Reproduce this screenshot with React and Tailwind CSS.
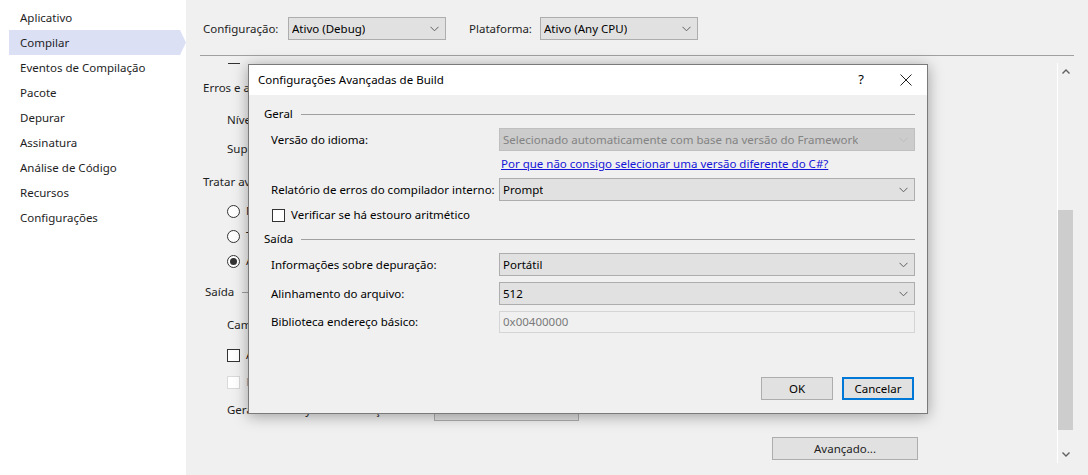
import React from "react";

const font = { fontFamily: '"Noto Sans", "Open Sans", sans-serif' };

const Chevron = ({ color = "#606060" }) => (
  <svg width="9" height="6" viewBox="0 0 9 6" className="shrink-0">
    <path d="M0.5 0.8 L4.5 4.8 L8.5 0.8" fill="none" stroke={color} strokeWidth="1" />
  </svg>
);

const Select = ({ value, className = "", disabled = false }) => (
  <div
    className={
      "flex items-center justify-between border pl-[3px] pr-[6px] " +
      (disabled
        ? "bg-[#cccccc] border-[#bfbfbf] text-[#838383] "
        : "bg-[#e1e1e1] border-[#adadad] text-black ") +
      className
    }
  >
    <span className="truncate">{value}</span>
    <Chevron color={disabled ? "#bcbcbc" : "#606060"} />
  </div>
);

const sideItems = [
  "Aplicativo",
  "Compilar",
  "Eventos de Compilação",
  "Pacote",
  "Depurar",
  "Assinatura",
  "Análise de Código",
  "Recursos",
  "Configurações",
];

const Radio = ({ checked }) => (
  <div className="w-[13px] h-[13px] shrink-0 rounded-full border border-[#333] bg-white flex items-center justify-center">
    {checked && <div className="w-[7px] h-[7px] rounded-full bg-[#333]" />}
  </div>
);

const Box = ({ disabled }) => (
  <div className={"w-[13px] h-[13px] shrink-0 border bg-white " + (disabled ? "border-[#d9d9d9]" : "border-[#333]")} />
);

const GroupTitle = ({ children, lineWidth }) => (
  <div className="flex items-center gap-[8px] whitespace-nowrap">
    <span>{children}</span>
    {lineWidth ? (
      <div className="h-px bg-[#a0a0a0]" style={{ width: lineWidth }} />
    ) : (
      <div className="flex-1 h-px bg-[#a0a0a0]" />
    )}
  </div>
);

const Row = ({ label, children, className = "" }) => (
  <div className={"flex items-center " + className}>
    <div className="w-[228px] shrink-0 whitespace-nowrap">{label}</div>
    <div className="flex-1 min-w-0">{children}</div>
  </div>
);

export default function App() {
  return (
    <div className="relative flex w-[1088px] h-[475px] overflow-hidden text-[11.5px] text-[#1e1e1e]" style={font}>
      {/* sidebar */}
      <div className="w-[186px] shrink-0 bg-white pt-[5px]">
        {sideItems.map((it) =>
          it === "Compilar" ? (
            <div
              key={it}
              className="h-[25px] ml-[9px] pl-[11px] flex items-center bg-[#dbe0f5] [clip-path:polygon(0_0,171px_0,177px_50%,171px_100%,0_100%)]"
            >
              {it}
            </div>
          ) : (
            <div key={it} className="h-[25px] pl-[20px] flex items-center whitespace-nowrap">
              {it}
            </div>
          )
        )}
      </div>

      {/* main */}
      <div className="flex-1 bg-[#f0f0f0] flex flex-col pl-[14px] pr-[14px]">
        <div className="flex items-center h-[23px] mt-[17px] ml-[3px]">
          <span className="w-[85px]">Configuração:</span>
          <Select value="Ativo (Debug)" className="w-[158px] h-[23px]" />
          <span className="ml-[23px] w-[71px]">Plataforma:</span>
          <Select value="Ativo (Any CPU)" className="w-[158px] h-[23px]" />
        </div>
        <div className="h-px bg-[#a0a0a0] mt-[15px]" />

        <div className="flex flex-1 min-h-0">
          {/* content behind dialog */}
          <div className="flex-1 flex flex-col overflow-hidden pl-[3px] whitespace-nowrap">
            <div className="h-[14px] pl-[25px] flex items-center">
              <div className="w-[12px] border-b border-[#333]" />
            </div>
            <div className="h-[36px] flex items-center">
              <GroupTitle lineWidth={500}>Erros e avisos</GroupTitle>
            </div>
            <div className="h-[28px] flex items-center pl-[24px]">Nível de aviso:</div>
            <div className="h-[30px] flex items-center pl-[24px]">Suprimir avisos:</div>
            <div className="h-[36px] flex items-center">Tratar avisos como erros</div>
            <div className="h-[22px] flex items-center pl-[24px] gap-[6px]"><Radio /> Nenhum</div>
            <div className="h-[28px] flex items-center pl-[24px] gap-[6px]"><Radio /> Todos</div>
            <div className="h-[22px] flex items-center pl-[24px] gap-[6px]"><Radio checked /> Avisos específicos:</div>
            <div className="h-[40px] flex items-center pl-[2px]">
              <GroupTitle lineWidth={500}>Saída</GroupTitle>
            </div>
            <div className="h-[26px] flex items-center pl-[24px]">Caminho de saída:</div>
            <div className="h-[34px] flex items-center pl-[24px] gap-[6px]"><Box /> Arquivo de documentação XML:</div>
            <div className="h-[20px] flex items-center pl-[24px] gap-[6px] text-[#a0a0a0]"><Box disabled /> Registrar para interoperabilidade COM</div>
            <div className="h-[36px] flex items-center pl-[24px]">
              <span className="w-[207px]">Gerar assembly de serialização:</span>
              <Select value="Auto" className="w-[145px] h-[21px]" />
            </div>
            <div className="h-[41px] flex items-center pl-[569px]">
              <div className="w-[146px] h-[23px] bg-[#e1e1e1] border border-[#adadad] flex items-center justify-center">
                Avançado...
              </div>
            </div>
          </div>

          {/* scrollbar */}
          <div className="w-[17px] mt-[7px] mb-[12px] bg-[#f0f0f0] border-l border-white flex flex-col items-center">
            <div className="h-[17px] flex items-center justify-center">
              <svg width="8" height="5" viewBox="0 0 8 5"><path d="M0.5 4.5 L4 1 L7.5 4.5" fill="none" stroke="#606060" strokeWidth="1.4" /></svg>
            </div>
            <div className="flex-1 w-full flex flex-col pt-[130px] pb-[16px] pr-px">
              <div className="flex-1 bg-[#cdcdcd]" />
            </div>
            <div className="h-[17px] flex items-center justify-center">
              <svg width="8" height="5" viewBox="0 0 8 5"><path d="M0.5 0.5 L4 4 L7.5 0.5" fill="none" stroke="#606060" strokeWidth="1.4" /></svg>
            </div>
          </div>
        </div>
      </div>

      {/* dialog */}
      <div className="absolute left-[248px] top-[64px] w-[680px] h-[350px] border border-[#7a7a7a] bg-[#f0f0f0] flex flex-col shadow-[0_2px_14px_rgba(0,0,0,0.35)]">
        <div className="h-[30px] bg-white flex items-center pl-[9px] pr-[15px] text-black">
          <span className="flex-1">Configurações Avançadas de Build</span>
          <span className="text-[13px] mr-[36px]">?</span>
          <svg width="12" height="12" viewBox="0 0 12 12"><path d="M0.5 0.5 L11.5 11.5 M11.5 0.5 L0.5 11.5" stroke="#222" strokeWidth="1" /></svg>
        </div>
        <div className="flex flex-col pl-[15px] pr-[12px] pt-[10px] text-black">
          <div className="h-[18px] flex items-center"><div className="flex-1"><GroupTitle>Geral</GroupTitle></div></div>
          <div className="pl-[7px]">
            <Row label="Versão do idioma:" className="mt-[5px]">
              <Select disabled value="Selecionado automaticamente com base na versão do Framework" className="h-[23px]" />
            </Row>
            <div className="h-[26px] flex items-center pl-[230px] whitespace-nowrap">
              <span className="text-[#1515d8] underline">Por que não consigo selecionar uma versão diferente do C#?</span>
            </div>
            <Row label="Relatório de erros do compilador interno:" className="mt-px">
              <Select value="Prompt" className="h-[23px]" />
            </Row>
            <div className="h-[20px] mt-[4px] flex items-center gap-[6px] pl-px">
              <Box /> Verificar se há estouro aritmético
            </div>
          </div>
          <div className="h-[18px] mt-[5px] flex items-center"><div className="flex-1"><GroupTitle>Saída</GroupTitle></div></div>
          <div className="pl-[7px]">
            <Row label="Informações sobre depuração:" className="mt-[5px]">
              <Select value="Portátil" className="h-[23px]" />
            </Row>
            <Row label="Alinhamento do arquivo:" className="mt-[6px]">
              <Select value="512" className="h-[23px]" />
            </Row>
            <Row label="Biblioteca endereço básico:" className="mt-[6px]">
              <div className="h-[22px] border border-[#d5d5d5] flex items-center pl-[3px] text-[#7a7a7a]">0x00400000</div>
            </Row>
          </div>
          <div className="flex justify-end gap-[9px] mt-[44px] pr-px">
            <div className="w-[72px] h-[23px] bg-[#e1e1e1] border border-[#adadad] flex items-center justify-center">OK</div>
            <div className="w-[72px] h-[23px] bg-[#e1e1e1] border-2 border-[#0078d7] flex items-center justify-center">Cancelar</div>
          </div>
        </div>
      </div>
    </div>
  );
}
